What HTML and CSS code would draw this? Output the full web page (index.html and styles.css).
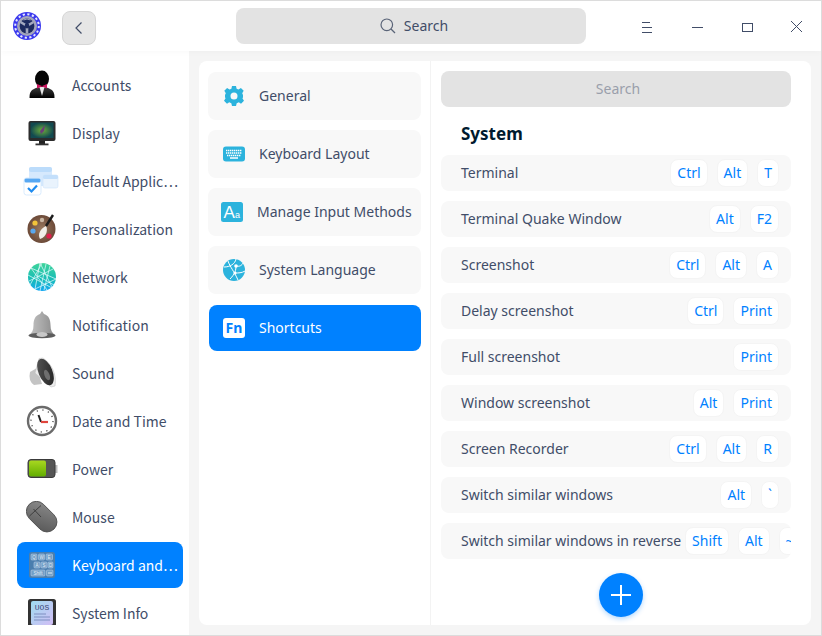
FILE: index.html
```html
<!DOCTYPE html>
<html lang="en">
<head>
<meta charset="utf-8">
<title>Control Center</title>
<link rel="stylesheet" href="styles.css">
</head>
<body>
<div class="window">
  <header class="titlebar">
    <svg class="logo" viewBox="0 0 28 28">
      <circle cx="14" cy="14" r="14" fill="#3a38ee"/>
      <circle cx="14" cy="14" r="11.800" fill="none" stroke="#e6e7ff" stroke-width="2" stroke-dasharray="2.200 2.430"/>
      <circle cx="14" cy="14" r="10" fill="#a3a5bb"/>
      <circle cx="14" cy="14" r="7.400" fill="#1d2a60"/>
      <path d="M14 14V21.500M14 14L7.500 10M14 14L20.500 10" stroke="#a3a8c0" stroke-width="2.600"/>
      <path d="M10.500 8A7 7 0 0 1 17.500 8" stroke="#a3a8c0" stroke-width="1" fill="none"/>
      <circle cx="14" cy="14" r="2.400" fill="#1d2a60"/>
    </svg>
    <button class="back" type="button" aria-label="Back">
      <svg viewBox="0 0 10 14" class="back-icon"><path d="M7.500 1.500L2 7L7.500 12.500" fill="none" stroke="#414d68" stroke-width="1.200"/></svg>
    </button>
    <div class="top-search">
      <svg viewBox="0 0 16 16" class="search-icon"><circle cx="6.800" cy="6.800" r="5.800" fill="none" stroke="#5a6478" stroke-width="1.200"/><path d="M11 11L15 15" stroke="#5a6478" stroke-width="1.200"/></svg>
      <span>Search</span>
    </div>
    <div class="win-buttons">
      <svg viewBox="0 0 50 50" class="win-btn"><path d="M20 21.500H28M20 26.500H30M20 31.500H30" stroke="#414d68" stroke-width="1"/></svg>
      <svg viewBox="0 0 50 50" class="win-btn"><path d="M20 26.500H31" stroke="#414d68" stroke-width="1"/></svg>
      <svg viewBox="0 0 50 50" class="win-btn"><rect x="20.500" y="22.500" width="10" height="8" fill="none" stroke="#414d68" stroke-width="1"/></svg>
      <svg viewBox="0 0 50 50" class="win-btn"><path d="M19 20L30 31M30 20L19 31" stroke="#414d68" stroke-width="1"/></svg>
    </div>
  </header>
  <div class="body">
    <nav class="sidebar">
      <div class="nav-item">
        <svg class="nav-icon" viewBox="0 0 32 32">
          <defs><linearGradient id="coat" x1="0" y1="0" x2="0" y2="1"><stop offset="0" stop-color="#3a3a3a"/><stop offset="1" stop-color="#000"/></linearGradient></defs>
          <ellipse cx="16" cy="10" rx="7" ry="8.500" fill="#060606"/>
          <path d="M3.500 29C3.500 23 5 20.500 11.500 18.500H20.500C27 20.500 28.500 23 28.500 29Z" fill="url(#coat)"/>
          <path d="M13.500 18L16 27L18.500 18Z" fill="#e8e8e8"/>
          <path d="M11 15L16 17L21 15V19.500L16 17.500L11 19.500Z" fill="#c8145e"/>
        </svg>
        <span class="nav-label">Accounts</span>
      </div>
      <div class="nav-item">
        <svg class="nav-icon" viewBox="0 0 32 32">
          <defs><radialGradient id="scr"><stop offset="0" stop-color="#6fae3a"/><stop offset="1" stop-color="#124a50"/></radialGradient></defs>
          <rect x="2.500" y="4" width="27" height="20" rx="2" fill="#2c2c2c"/>
          <rect x="4.500" y="5.500" width="23" height="15.500" fill="url(#scr)"/>
          <path d="M19 8L14 14L15 17L18 14Z" fill="#6a3e78"/>
          <rect x="13" y="24" width="6" height="3" fill="#222"/>
          <rect x="9.500" y="26.500" width="13" height="1.800" fill="#333"/>
        </svg>
        <span class="nav-label">Display</span>
      </div>
      <div class="nav-item">
        <svg class="nav-icon wide" viewBox="0 0 36 32">
          <rect x="6" y="2" width="23" height="19" rx="2.500" fill="#d6e9fd"/>
          <rect x="6" y="2" width="23" height="5" rx="2" fill="#bcdcfb"/>
          <rect x="20" y="10" width="15" height="13" rx="2" fill="#e9f3fd" stroke="#cfe4fb" stroke-width=".6"/>
          <rect x="20" y="10" width="15" height="4" rx="1.500" fill="#c3dffb"/>
          <rect x="1" y="13" width="17" height="17" rx="2.500" fill="#fff" stroke="#cfe6fd" stroke-width=".8"/>
          <rect x="1.500" y="13.500" width="16" height="4" rx="1.500" fill="#58a8f2"/>
          <path d="M5 23L8.500 26.500L14 20.500" fill="none" stroke="#1f8cf0" stroke-width="2.200"/>
        </svg>
        <span class="nav-label">Default Applic⋯</span>
      </div>
      <div class="nav-item">
        <svg class="nav-icon" viewBox="0 0 32 32">
          <defs><radialGradient id="pal"><stop offset="0" stop-color="#9a7a60"/><stop offset="1" stop-color="#6c4a38"/></radialGradient></defs>
          <circle cx="15.500" cy="16" r="14" fill="url(#pal)"/>
          <circle cx="9" cy="10" r="2.600" fill="#f3c43a"/>
          <circle cx="7" cy="18" r="2.600" fill="#5aa8ee"/>
          <circle cx="16" cy="7" r="2.200" fill="#c9b7a4"/>
          <circle cx="23" cy="23" r="2.600" fill="#e01e4c"/>
          <path d="M14 26C11 21 15 15 20 13C22 16 21 24 14 26Z" fill="#f1eee8"/>
          <path d="M20 13L27 2" stroke="#1c1c1c" stroke-width="2.400"/>
        </svg>
        <span class="nav-label">Personalization</span>
      </div>
      <div class="nav-item">
        <svg class="nav-icon" viewBox="0 0 32 32">
          <defs><linearGradient id="net" x1="0" y1="0" x2="0" y2="1"><stop offset="0" stop-color="#3fd49a"/><stop offset=".6" stop-color="#17bcb8"/><stop offset="1" stop-color="#14a8f2"/></linearGradient></defs>
          <circle cx="16" cy="16" r="14" fill="url(#net)"/>
          <path d="M14 2L9 28M14 2L26 26M5 7L30 18M3 20L27 8M9 28L30 18M5 7L21 29M12 15L28 24M20 3L14 30M16 2L4 24M24 5L18 29M2 14L26 27" stroke="#eafcff" stroke-width=".7" fill="none"/>
        </svg>
        <span class="nav-label">Network</span>
      </div>
      <div class="nav-item">
        <svg class="nav-icon" viewBox="0 0 32 32">
          <defs><linearGradient id="bell" x1="0" y1="0" x2="1" y2="0"><stop offset="0" stop-color="#c2c2c2"/><stop offset=".5" stop-color="#a8a8a8"/><stop offset="1" stop-color="#8a8a8a"/></linearGradient></defs>
          <path d="M16 2L18 5C23 6.500 24.500 11 24.500 16C24.500 21 26 24 29 26H3C6 24 7.500 21 7.500 16C7.500 11 9 6.500 14 5Z" fill="url(#bell)"/>
          <ellipse cx="16" cy="26.500" rx="13.500" ry="2.800" fill="#5d5d5d"/>
          <ellipse cx="16" cy="25.500" rx="5.500" ry="2.500" fill="#c8c8c8"/>
        </svg>
        <span class="nav-label">Notification</span>
      </div>
      <div class="nav-item">
        <svg class="nav-icon" viewBox="0 0 32 32">
          <defs><linearGradient id="spk" x1="0" y1="0" x2="1" y2="1"><stop offset="0" stop-color="#5a5a5a"/><stop offset="1" stop-color="#1e1e1e"/></linearGradient></defs>
          <path d="M4 15L11 11L16 27L8 28Q2 24 4 15Z" fill="#c4c4c4"/>
          <path d="M13 1.500L17 1C26 7 31 18 29 29L25 30L9 16Z" fill="#ececec" stroke="#bbb" stroke-width=".5"/>
          <ellipse cx="19.500" cy="15" rx="7" ry="14" transform="rotate(-22 19.500 15)" fill="url(#spk)"/>
          <ellipse cx="21" cy="18" rx="2.500" ry="5.500" transform="rotate(-22 21 18)" fill="#6e6e6e"/>
        </svg>
        <span class="nav-label">Sound</span>
      </div>
      <div class="nav-item">
        <svg class="nav-icon" viewBox="0 0 32 32">
          <circle cx="16" cy="16" r="14" fill="#fff" stroke="#6b6b6b" stroke-width="2.400"/>
          <circle cx="16" cy="16" r="11" fill="none" stroke="#333" stroke-width="1.200" stroke-dasharray="1.200 4.560"/>
          <path d="M15 17L12.500 10" stroke="#222" stroke-width="2"/>
          <path d="M15 17H22" stroke="#e0453c" stroke-width="2.200"/>
        </svg>
        <span class="nav-label">Date and Time</span>
      </div>
      <div class="nav-item">
        <svg class="nav-icon" viewBox="0 0 32 32">
          <defs><linearGradient id="bat" x1="0" y1="0" x2="0" y2="1"><stop offset="0" stop-color="#a8d820"/><stop offset="1" stop-color="#62ad00"/></linearGradient></defs>
          <rect x="29" y="12" width="2.500" height="8" fill="#bbb"/>
          <rect x="2" y="6.500" width="27" height="18" rx="3" fill="#555" stroke="#3a3a3a" stroke-width="1"/>
          <rect x="3" y="7.500" width="17" height="16" rx="2" fill="url(#bat)"/>
        </svg>
        <span class="nav-label">Power</span>
      </div>
      <div class="nav-item">
        <svg class="nav-icon" viewBox="0 0 32 32">
          <defs><linearGradient id="ms" x1="0" y1="0" x2="1" y2="1"><stop offset="0" stop-color="#8c8c8c"/><stop offset="1" stop-color="#565656"/></linearGradient></defs>
          <rect x="-2" y="8" width="35" height="20" rx="10" transform="rotate(45 16 16) translate(0 -2)" fill="url(#ms)" stroke="#444" stroke-width=".8"/>
          <path d="M3.500 15L15 4.500M7.500 8L15 16" stroke="#3f3f3f" stroke-width="1"/>
        </svg>
        <span class="nav-label">Mouse</span>
      </div>
      <div class="nav-item active">
        <svg class="nav-icon" viewBox="0 0 32 32">
          <rect x="3" y="3" width="26" height="26" rx="2.500" fill="#4a7eae"/>
          <g fill="#739fc6" stroke="#c8dbec" stroke-width=".5">
            <rect x="5" y="5" width="6" height="6" rx="1"/><rect x="12.500" y="5" width="6" height="6" rx="1"/><rect x="20" y="5" width="6.500" height="6" rx="1"/>
            <rect x="8" y="13" width="6" height="6" rx="1"/><rect x="15" y="13" width="6" height="6" rx="1"/><rect x="22" y="13" width="5" height="6" rx="1"/>
            <rect x="5" y="21" width="14" height="6" rx="1"/><rect x="20.500" y="21" width="6.500" height="6" rx="1"/>
          </g>
          <g class="key-caps">
            <text x="8" y="10">Q</text><text x="15.500" y="10">W</text><text x="23" y="10">E</text>
            <text x="11" y="18">A</text><text x="18" y="18">S</text><text x="24.500" y="18">D</text>
            <text x="12" y="26">Shift</text>
          </g>
          <path d="M22 24H26" stroke="#e3eef7"/>
        </svg>
        <span class="nav-label">Keyboard and⋯</span>
      </div>
      <div class="nav-item">
        <svg class="nav-icon" viewBox="0 0 32 32">
          <defs><linearGradient id="uos" x1="0" y1="0" x2="1" y2="1"><stop offset="0" stop-color="#9fdcf0"/><stop offset="1" stop-color="#d2bdf5"/></linearGradient></defs>
          <rect x="2" y="2" width="28" height="28" rx="2.500" fill="#333"/>
          <rect x="5" y="4" width="22" height="24" rx="2" fill="url(#uos)"/>
          <text x="16" y="13" class="uos-mark">UOS</text>
          <path d="M8 17H20M8 20H24M8 23H24" stroke="#7f8fc0" stroke-width="1"/>
        </svg>
        <span class="nav-label">System Info</span>
      </div>
    </nav>
    <main class="main">
      <section class="panel">
        <div class="categories">
          <div class="cat">
            <svg class="cat-icon" viewBox="0 0 22 22"><path fill="#2cb3dd" fill-rule="evenodd" d="M9 1H13L13.600 3.700L15.500 4.500L17.900 3L20.700 5.800L19.200 8.200L20 10V12.200L19.500 13.500L21 15.800L18 18.800L15.800 17.300L13.700 18.200L13 21H9L8.300 18.200L6.200 17.300L4 18.800L1 15.800L2.500 13.500L2 12V10L2.800 8.200L1.300 5.800L4.100 3L6.500 4.500L8.400 3.700ZM11 7.500A3.500 3.500 0 1 0 11 14.500A3.500 3.500 0 1 0 11 7.500Z"/></svg>
            <span class="cat-label">General</span>
          </div>
          <div class="cat">
            <svg class="cat-icon" viewBox="0 0 22 22"><rect y="3.500" width="22" height="15" rx="3" fill="#2cb3dd"/><path d="M3 7.500H19M3 10H19M4 12.500H18" stroke="#fff" stroke-width="1.400" stroke-dasharray="1.400 .6" fill="none"/><path d="M7 15H15" stroke="#fff" stroke-width="1.300"/></svg>
            <span class="cat-label">Keyboard Layout</span>
          </div>
          <div class="cat cat-wide">
            <svg class="cat-icon" viewBox="0 0 22 20"><rect width="22" height="20" rx="2.500" fill="#2cb3dd"/><text x="2.500" y="16" class="aa-big">A</text><text x="14" y="16" class="aa-small">a</text></svg>
            <span class="cat-label">Manage Input Methods</span>
          </div>
          <div class="cat">
            <svg class="cat-icon" viewBox="0 0 22 22"><circle cx="11" cy="11" r="11" fill="#2cb3dd"/><path d="M13 0C12 5 7 8 1 8M5 2C7 8 11 12 15 21M13 7C17 8 19 6 20 4M13 7C13 11 12 15 7 20M12 14C15 14 19 14 22 12" stroke="#fff" stroke-width="1" fill="none"/><circle cx="13" cy="7" r="1.800" fill="#fff"/><circle cx="12" cy="14" r="1.500" fill="#fff"/></svg>
            <span class="cat-label">System Language</span>
          </div>
          <div class="cat active">
            <svg class="cat-icon" viewBox="0 0 22 20"><rect width="22" height="20" rx="3" fill="#fff"/><text x="11" y="15" class="fn-mark">Fn</text></svg>
            <span class="cat-label">Shortcuts</span>
          </div>
        </div>
        <div class="shortcuts">
          <div class="panel-search"><span class="search-hint">Search</span></div>
          <h2 class="group-title">System</h2>
          <div class="rows">
            <div class="row"><span class="row-label">Terminal</span><span class="keys"><span class="key">Ctrl</span><span class="key">Alt</span><span class="key">T</span></span></div>
            <div class="row"><span class="row-label">Terminal Quake Window</span><span class="keys"><span class="key">Alt</span><span class="key">F2</span></span></div>
            <div class="row"><span class="row-label">Screenshot</span><span class="keys"><span class="key">Ctrl</span><span class="key">Alt</span><span class="key">A</span></span></div>
            <div class="row"><span class="row-label">Delay screenshot</span><span class="keys"><span class="key">Ctrl</span><span class="key">Print</span></span></div>
            <div class="row"><span class="row-label">Full screenshot</span><span class="keys"><span class="key">Print</span></span></div>
            <div class="row"><span class="row-label">Window screenshot</span><span class="keys"><span class="key">Alt</span><span class="key">Print</span></span></div>
            <div class="row"><span class="row-label">Screen Recorder</span><span class="keys"><span class="key">Ctrl</span><span class="key">Alt</span><span class="key">R</span></span></div>
            <div class="row"><span class="row-label">Switch similar windows</span><span class="keys"><span class="key">Alt</span><span class="key">`</span></span></div>
            <div class="row"><span class="row-label">Switch similar windows in reverse</span><span class="keys"><span class="key">Shift</span><span class="key">Alt</span><span class="key">~</span></span></div>
          </div>
          <div class="add-bar">
            <button class="add" type="button" aria-label="Add">
              <svg viewBox="0 0 20 20" class="add-icon"><path d="M10 0V20M0 10H20" stroke="#fff" stroke-width="2"/></svg>
            </button>
          </div>
        </div>
      </section>
    </main>
  </div>
</div>
</body>
</html>
```

FILE: styles.css
```css
* { box-sizing: border-box; }
html, body { margin: 0; height: 100%; }
body {
  font-family: "Noto Sans CJK SC", "Noto Sans", sans-serif;
  font-size: 14px;
  color: #414d68;
  background: #dcdcdc;
}
.window {
  width: 822px;
  height: 636px;
  border: 1px solid #dcdcdc;
  background: #fff;
  display: flex;
  flex-direction: column;
  overflow: hidden;
}
.titlebar {
  height: 50px;
  flex: none;
  display: flex;
  align-items: center;
  background: #fff;
  padding-left: 12px;
  position: relative;
  z-index: 1;
  box-shadow: 0 2px 6px rgba(0, 0, 0, .025);
}
.logo { width: 28px; height: 28px; flex: none; margin-top: -1px; }
.back {
  width: 34px;
  height: 34px;
  margin-left: 21px;
  margin-top: 3px;
  flex: none;
  display: flex;
  align-items: center;
  justify-content: center;
  padding: 0;
  border: 1px solid #d6d6d6;
  border-radius: 8px;
  background: #e6e6e6;
}
.back-icon { width: 10px; height: 14px; }
.top-search {
  width: 350px;
  height: 36px;
  margin-left: 140px;
  flex: none;
  display: flex;
  align-items: center;
  justify-content: center;
  gap: 8px;
  padding-left: 6px;
  border-radius: 8px;
  background: #e3e3e3;
  font-family: "Noto Sans", sans-serif;
  font-size: 14px;
}
.top-search span { margin-bottom: 2px; }
.search-icon { width: 16px; height: 16px; }
.win-buttons { display: flex; margin-left: 36px; }
.win-btn { width: 50px; height: 50px; flex: none; }
.body { flex: 1; min-height: 0; display: flex; }
.sidebar {
  width: 188px;
  height: 574px;
  flex: none;
  padding: 11px 6px 0 16px;
  display: flex;
  flex-direction: column;
  gap: 2px;
  background: #fff;
  overflow: hidden;
}
.nav-item {
  height: 46px;
  flex: none;
  display: flex;
  align-items: center;
  padding-left: 9px;
  gap: 14px;
  border-radius: 8px;
  font-size: 14px;
}
.nav-item.active { background: #0081ff; color: #fff; }
.nav-icon { width: 32px; height: 32px; flex: none; }
.nav-icon.wide { width: 36px; margin-left: -3px; margin-right: -1px; }
.nav-label { white-space: nowrap; }
.key-caps text { font-family: "Liberation Sans", sans-serif; font-size: 4.5px; fill: #e3eef7; text-anchor: middle; }
.uos-mark { font-family: "Liberation Mono", monospace; font-size: 8px; fill: #3b4a78; text-anchor: middle; }
.main { flex: 1; min-width: 0; padding: 10px; background: #f5f5f5; }
.panel {
  height: 100%;
  display: flex;
  border-radius: 8px;
  background: #fff;
  overflow: hidden;
}
.categories {
  width: 232px;
  flex: none;
  padding: 11px 9px 0;
  display: flex;
  flex-direction: column;
  gap: 10px;
  border-right: 1px solid #f3f3f3;
  font-family: "Noto Sans", sans-serif;
}
.cat {
  height: 48px;
  flex: none;
  display: flex;
  align-items: center;
  padding-left: 15px;
  gap: 14px;
  border-radius: 8px;
  background: #f8f8f8;
  font-size: 14px;
}
.cat-label { margin-bottom: 2px; }
.cat-wide { padding-left: 13px; }
.cat.active {
  height: 46px;
  margin: 1px 0 1px 1px;
  padding-left: 14px;
  background: #0081ff;
  color: #fff;
}
.cat-icon { width: 22px; height: 22px; flex: none; }
.aa-big { font-family: "Liberation Sans", sans-serif; font-size: 17px; fill: #fff; }
.aa-small { font-family: "Liberation Sans", sans-serif; font-size: 9px; fill: #fff; }
.fn-mark { font-family: "Noto Sans", sans-serif; font-size: 14px; font-weight: 700; fill: #0081ff; text-anchor: middle; }
.shortcuts {
  flex: 1;
  min-width: 0;
  padding: 10px 20px 0 10px;
  display: flex;
  flex-direction: column;
  font-family: "Noto Sans", sans-serif;
}
.panel-search {
  height: 36px;
  flex: none;
  display: flex;
  align-items: center;
  justify-content: center;
  padding-left: 4px;
  border-radius: 8px;
  background: #e3e3e3;
  color: #9a9fab;
  font-size: 14px;
}
.search-hint { margin-bottom: 2px; }
.group-title {
  margin: 0;
  height: 48px;
  flex: none;
  display: flex;
  align-items: center;
  padding: 10px 0 5px 20px;
  font-size: 17px;
  font-weight: 700;
  color: #001a2e;
  line-height: 1;
}
.rows { display: flex; flex-direction: column; gap: 10px; }
.row {
  height: 36px;
  flex: none;
  display: flex;
  align-items: center;
  padding: 0 12px 0 20px;
  border-radius: 8px;
  background: #f8f8f8;
  font-size: 14px;
  overflow: hidden;
}
.row-label { flex: none; margin-right: auto; margin-bottom: 2px; white-space: nowrap; }
.keys { display: flex; gap: 9px; margin-left: 4px; flex: none; }
.key {
  height: 28px;
  padding: 0 6px 2px;
  display: flex;
  align-items: center;
  border-radius: 8px;
  background: #fff;
  border: 1px solid #f4f4f4;
  color: #0081ff;
  font-size: 14px;
}
.add-bar { display: flex; justify-content: center; padding: 14px 0 0 10px; }
.add {
  width: 44px;
  height: 44px;
  padding: 0;
  display: flex;
  align-items: center;
  justify-content: center;
  border: 0;
  border-radius: 50%;
  background: #0081ff;
  box-shadow: 0 2px 5px rgba(0, 129, 255, .3);
}
.add-icon { width: 20px; height: 20px; }
```
